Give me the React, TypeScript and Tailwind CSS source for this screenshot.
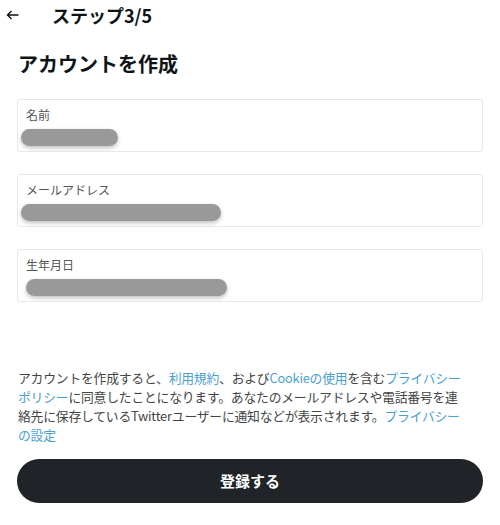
export default function App() {
    const fields = [
        { label: '名前', bar: 'w-[97px] ml-[1px]' },
        { label: 'メールアドレス', bar: 'w-[200px] ml-[1px]' },
        { label: '生年月日', bar: 'w-[201px] ml-[6px]' },
    ];

    return (
        <div className="w-[500px] h-[525px] bg-white text-[#0f1419] overflow-hidden" style={{ fontFamily: '"Noto Sans CJK JP", "Noto Sans", sans-serif' }}>
            {/* Header */}
            <div className="flex items-center h-[29px] pl-[6px]">
                <svg width="13" height="10" viewBox="0 0 13 10" fill="none" stroke="#111" strokeWidth="1.4">
                    <path d="M12.5 5H1.5M5.5 1L1.5 5l4 4" />
                </svg>
                <span className="ml-[33px] text-[18px] font-bold leading-none">ステップ3/5</span>
            </div>

            {/* Title */}
            <h1 className="mt-[22px] pl-[18px] text-[20px] font-bold leading-[26px]">アカウントを作成</h1>

            {/* Inputs */}
            <div className="mt-[22px] mx-[17px] flex flex-col gap-[22px]">
                {fields.map((f) => (
                    <div key={f.label} className="h-[53px] border border-[#e8e8e8] rounded-[3px] pt-[7px] pl-[2px]">
                        <div className="pl-[6px] text-[12px] leading-[16px] text-[#555]">{f.label}</div>
                        <div className={`mt-[6px] h-[17px] rounded-full bg-[#999] shadow-[0_2px_4px_rgba(0,0,0,0.25)] ${f.bar}`} />
                    </div>
                ))}
            </div>

            {/* Terms */}
            <p className="mt-[66px] pl-[18px] pr-[4px] text-[12.8px] leading-[19px] tracking-[-0.2px] text-[#444] whitespace-nowrap">
                アカウントを作成すると、<span className="text-[#4a9fd1]">利用規約</span>、および<span className="text-[#4a9fd1]">Cookieの使用</span>を含む<span className="text-[#4a9fd1]">プライバシー</span>
                <br />
                <span className="text-[#4a9fd1]">ポリシー</span>に同意したことになります。あなたのメールアドレスや電話番号を連
                <br />
                絡先に保存しているTwitterユーザーに通知などが表示されます。<span className="text-[#4a9fd1]">プライバシー</span>
                <br />
                <span className="text-[#4a9fd1]">の設定</span>
            </p>

            {/* Submit */}
            <div className="mt-[15px] px-[17px]">
                <button className="w-full h-[44px] rounded-full bg-[#202327] text-white text-[15px] font-bold">
                    登録する
                </button>
            </div>
        </div>
    );
}
